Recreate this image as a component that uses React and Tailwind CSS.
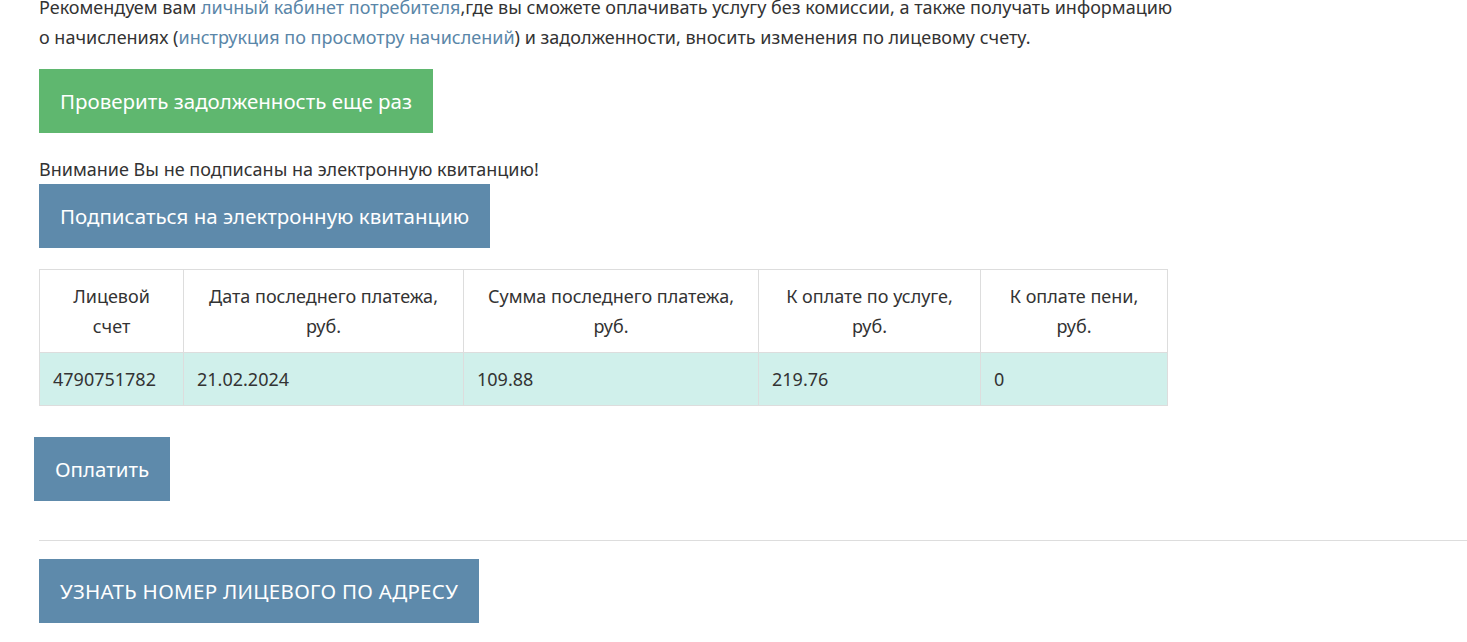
const cols = [
  { head: ['Лицевой', 'счет'], value: '4790751782', w: 'w-[144px]' },
  { head: ['Дата последнего платежа,', 'руб.'], value: '21.02.2024', w: 'w-[280px]' },
  { head: ['Сумма последнего платежа,', 'руб.'], value: '109.88', w: 'w-[295px]' },
  { head: ['К оплате по услуге,', 'руб.'], value: '219.76', w: 'w-[222px]' },
  { head: ['К оплате пени,', 'руб.'], value: '0', w: 'w-[187px]' },
];

export default function App() {
  return (
    <div className="min-h-screen overflow-hidden bg-white pl-[39px] text-[18px] leading-[30px] text-[#333]" style={{ fontFamily: '"Noto Sans", sans-serif' }}>
      {/* notice */}
      <p className="-mt-[8px] w-[1200px]">
        Рекомендуем вам <a className="text-[#5a86a8]">личный кабинет потребителя</a>,где вы сможете оплачивать услугу без комиссии, а также получать информацию
        <br />
        о начислениях (<a className="text-[#5a86a8]">инструкция по просмотру начислений</a>) и задолженности, вносить изменения по лицевому счету.
      </p>

      <button className="mt-[17px] block bg-[#5fb76f] px-[21px] py-5 text-[20.5px] leading-6 text-white">
        Проверить задолженность еще раз
      </button>

      <p className="mt-[21px]">Внимание Вы не подписаны на электронную квитанцию!</p>
      <button className="block bg-[#5e8aab] px-[21px] py-5 text-[20.5px] leading-6 text-white">
        Подписаться на электронную квитанцию
      </button>

      {/* accounts table */}
      <table className="mt-[21px] w-[1128px] table-fixed border-collapse">
        <thead>
          <tr>
            {cols.map((c) => (
              <th key={c.value} className={`${c.w} border border-[#dddddd] px-[14px] py-[11px] text-center font-normal`}>
                {c.head[0]}
                <br />
                {c.head[1]}
              </th>
            ))}
          </tr>
        </thead>
        <tbody>
          <tr className="bg-[#d0f0eb]">
            {cols.map((c) => (
              <td key={c.value} className="border border-[#dddddd] px-[13px] py-[11px] text-left">
                {c.value}
              </td>
            ))}
          </tr>
        </tbody>
      </table>

      <button className="-ml-[5px] mt-[31px] block bg-[#5e8aab] px-[21px] py-5 text-[20.5px] leading-6 text-white">
        Оплатить
      </button>

      <div className="mt-[39px] h-px bg-[#dddddd]" />

      <button className="mt-[18px] block bg-[#5e8aab] px-[21px] py-5 text-[20.5px] leading-6 tracking-[0.3px] text-white">
        УЗНАТЬ НОМЕР ЛИЦЕВОГО ПО АДРЕСУ
      </button>
    </div>
  );
}
